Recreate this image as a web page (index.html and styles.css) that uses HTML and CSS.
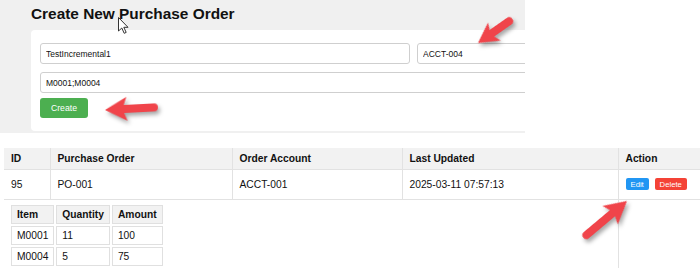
FILE: index.html
```html
<!DOCTYPE html>
<html lang="en">
<head>
  <meta charset="UTF-8" />
  <title>Purchase Orders</title>
  <link rel="stylesheet" href="styles.css">
</head>
<body>
  <section class="create-panel">
    <h1>Create New Purchase Order</h1>
    <form class="create-card">
      <div class="field-row">
        <input type="text" class="input-po" value="TestIncremental1" />
        <input type="text" class="input-account" value="ACCT-004" />
      </div>
      <input type="text" class="input-items" value="M0001;M0004" />
      <button type="button" class="create-button">Create</button>
    </form>
  </section>

  <table class="orders">
    <colgroup>
      <col style="width: 46px">
      <col style="width: 182px">
      <col style="width: 170px">
      <col style="width: 216px">
      <col>
    </colgroup>
    <thead>
      <tr>
        <th>ID</th>
        <th>Purchase Order</th>
        <th>Order Account</th>
        <th>Last Updated</th>
        <th>Action</th>
      </tr>
    </thead>
    <tbody>
      <tr>
        <td>95</td>
        <td>PO-001</td>
        <td>ACCT-001</td>
        <td>2025-03-11 07:57:13</td>
        <td>
          <button class="edit-button">Edit</button>
          <button class="delete-button">Delete</button>
        </td>
      </tr>
      <tr>
        <td colspan="4" class="items-cell">
          <table class="items">
            <tr><th>Item</th><th>Quantity</th><th>Amount</th></tr>
            <tr><td>M0001</td><td>11</td><td>100</td></tr>
            <tr><td>M0004</td><td>5</td><td>75</td></tr>
          </table>
        </td>
        <td></td>
      </tr>
    </tbody>
  </table>

  <!-- annotations drawn on top of the screenshot -->
  <svg class="overlay" width="700" height="268" viewBox="0 0 700 268">
    <g class="arrows" fill="#f0444a">
      <path transform="translate(105 110) rotate(-3)" d="M0 0 L22 -12 L19 -4 L49 -4 A4 4 0 0 1 49 4 L19 4 L22 12 Z" />
      <path transform="translate(478 43) rotate(-35)" d="M0 0 L20 -11 L17 -4 L38 -4 A4 4 0 0 1 38 4 L17 4 L20 11 Z" />
      <path transform="translate(627 201) rotate(140)" d="M0 0 L22 -12 L19 -4 L53 -4 A4 4 0 0 1 53 4 L19 4 L22 12 Z" />
    </g>
    <path class="cursor" transform="translate(118 17)" d="M0.5 0.5 L0.5 14 L3.8 11 L6.2 16.3 L8.2 15.4 L5.8 10.3 L10 10.3 Z" />
  </svg>
</body>
</html>
```

FILE: styles.css
```css
body {
  margin: 0;
  font-family: "Liberation Sans", Arial, sans-serif;
  color: #111;
  background-color: #fff;
  position: relative;
  width: 700px;
  height: 268px;
  overflow: hidden;
}

.create-panel {
  width: 525px;
  height: 133px;
  box-sizing: border-box;
  padding: 5px 0 0 31px;
  background-color: #f0f0f0;
  overflow: hidden;
}

h1 {
  margin: 0 0 7px;
  font-size: 15.4px;
  line-height: 18px;
  font-weight: bold;
}

.create-card {
  width: 540px;
  box-sizing: border-box;
  padding: 13px 9px 13px;
  background-color: #fff;
  border-radius: 4px;
  display: flex;
  flex-direction: column;
  align-items: flex-start;
  gap: 8px;
}

.field-row {
  display: flex;
  gap: 7px;
}

input {
  height: 21px;
  box-sizing: border-box;
  border: 1px solid #cfcfcf;
  border-radius: 3px;
  padding: 0 5px;
  font-family: "Liberation Sans", Arial, sans-serif;
  font-size: 8.5px;
  color: #111;
  background-color: #fff;
}

.input-po {
  width: 370px;
}

.input-account {
  width: 145px;
}

.input-items {
  width: 522px;
}

.create-button {
  margin-top: -3px;
  width: 48px;
  height: 20px;
  border: none;
  border-radius: 3px;
  background-color: #4caf50;
  color: #fff;
  font-family: "Liberation Sans", Arial, sans-serif;
  font-size: 8.7px;
  padding: 0;
}

/* Order list */
.orders {
  margin: 15px 0 0 4px;
  width: 696px;
  table-layout: fixed;
  border-collapse: collapse;
  font-size: 10.25px;
}

.orders th,
.orders td {
  text-align: left;
  border-bottom: 1px solid #e2e2e2;
}

.orders > thead > tr > th + th,
.orders > tbody > tr > td + td {
  border-left: 1px solid #e2e2e2;
}

.orders > thead > tr > th {
  padding: 5px 7px 5px;
  background-color: #f2f2f2;
  font-weight: bold;
}

.orders > tbody > tr > td {
  padding: 9px 7px 9px;
  vertical-align: top;
}

.orders > tbody > tr > td.items-cell {
  padding: 3px 5px 10px;
}

.edit-button,
.delete-button {
  height: 12px;
  border: none;
  border-radius: 2px;
  padding: 0 5px;
  margin-top: -1px;
  color: #fff;
  font-family: "Liberation Sans", Arial, sans-serif;
  font-size: 7.7px;
  vertical-align: top;
}

.edit-button {
  background-color: #2196f3;
}

.delete-button {
  margin-left: 3px;
  background-color: #f44336;
}

.items {
  border-collapse: separate;
  border-spacing: 2px;
  font-size: 10.25px;
}

.items th,
.items td {
  border: 1px solid #e0e0e0;
  padding: 3px 5px;
  text-align: left;
}

.items th {
  background-color: #f2f2f2;
  font-weight: bold;
}

.overlay {
  position: absolute;
  top: 0;
  left: 0;
  pointer-events: none;
}

.arrows {
  filter: drop-shadow(2px 3px 2px rgba(0, 0, 0, 0.35));
}

.cursor {
  fill: #fff;
  stroke: #333;
  stroke-width: 1;
}
```
